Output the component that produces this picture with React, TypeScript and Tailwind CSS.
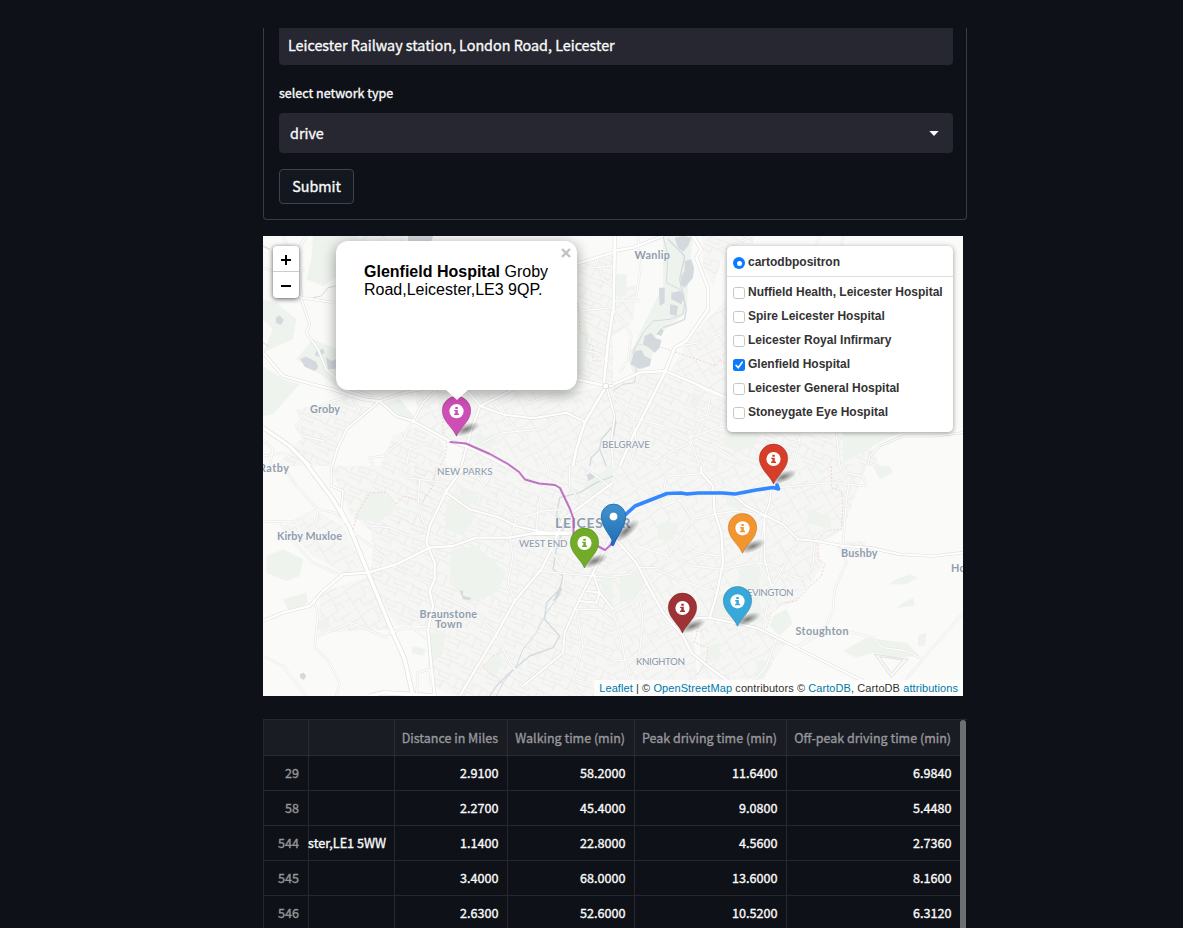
import React from "react";

const SANS = "font-['Noto_Sans_CJK_JP',sans-serif] [-webkit-text-stroke:0.35px_currentColor]";

type Shape = { q: number; d: string; w?: number };

const QUADRANTS = ["", "translate(0 0)", "translate(1050 0)", "translate(0 690)", "translate(1050 690)"];

const URBAN: Shape[] = [
  { q: 1, d: "M100 520L240 490L330 520L230 600L200 690H40L120 600Z" },
  { q: 1, d: "M460 470H940L1050 440V690H590L600 640L460 560Z" },
  { q: 1, d: "M945 80L1050 60V440L945 430Z" },
  { q: 1, d: "M190 10L330 0H430V15H260L215 80L170 60Z" },
  { q: 1, d: "M390 600L460 570L540 620L550 690H350Z" },
  { q: 2, d: "M0 150H70L60 260L0 300Z" },
  { q: 2, d: "M0 440L150 400L340 480L440 580L620 600H760L800 690H0Z" },
  { q: 2, d: "M230 310L340 190V480L170 410Z" },
  { q: 2, d: "M270 0H420V25H340L300 150L270 90Z" },
  { q: 3, d: "M60 180L170 140L240 180L310 320L240 320L150 270Z" },
  { q: 3, d: "M450 0H1050V690H580L500 660L490 480L400 480L320 330L340 180L480 150Z" },
  { q: 3, d: "M170 380L320 330L390 490L170 500Z" },
  { q: 3, d: "M200 0H520L480 200H330L260 140Z" },
  { q: 4, d: "M0 0H760L690 190L610 240L630 300L550 405L480 430L450 490L240 500L260 690H0Z" },
  { q: 4, d: "M670 230L760 225L750 275L680 270Z" },
  { q: 4, d: "M260 490L450 490L520 530L440 640H260Z" },
];

const GREEN: Shape[] = [
  { q: 1, d: "M150 0H280L290 60L240 110L180 150L130 130L145 70Z" },
  { q: 1, d: "M0 190L40 200L100 250L90 310L0 350L30 280L0 250Z" },
  { q: 1, d: "M0 390L60 430L110 445L60 500L30 535L0 540Z" },
  { q: 1, d: "M150 310L220 340V450L150 400L100 370Z" },
  { q: 1, d: "M365 500L410 490L460 550L400 540Z" },
  { q: 1, d: "M520 465L600 470L620 550L570 590L530 540Z" },
  { q: 1, d: "M850 470L950 465L920 490L860 500Z" },
  { q: 1, d: "M945 200L980 300L960 400L945 420Z" },
  { q: 1, d: "M640 590L700 610L680 640L630 620Z" },
  { q: 2, d: "M150 0H240L225 150L220 230L130 300L110 390L60 410L45 370L90 270L150 150Z" },
  { q: 2, d: "M0 115H40V180H0Z" },
  { q: 2, d: "M240 470L270 480L250 515L230 500Z" },
  { q: 2, d: "M345 590H430L440 620L370 650L320 610Z" },
  { q: 2, d: "M690 590H860L780 630L690 680Z" },
  { q: 3, d: "M310 80L350 75L390 100L400 130L350 165L270 160Z" },
  { q: 3, d: "M555 100L600 90L640 140L600 210L545 190Z" },
  { q: 3, d: "M590 60L650 90L640 120L590 100Z" },
  { q: 3, d: "M565 250L640 240L730 320L700 380L620 410L560 350Z" },
  { q: 3, d: "M10 270L60 250L120 280L110 330L70 345L10 320Z" },
  { q: 3, d: "M60 400L130 380L135 410L80 440Z" },
  { q: 3, d: "M500 510L550 490L540 560L500 600Z" },
  { q: 3, d: "M450 540L490 550L480 570L445 560Z" },
  { q: 3, d: "M660 600L710 560L720 590L690 640Z" },
  { q: 3, d: "M960 50L1050 0V60L990 90Z" },
  { q: 3, d: "M1010 330L1050 320V420L1020 400Z" },
  { q: 3, d: "M165 465L200 460L195 490L160 490Z" },
  { q: 4, d: "M140 170L200 170L180 225L130 220Z" },
  { q: 4, d: "M20 330L80 310L100 350L70 400L20 410Z" },
  { q: 4, d: "M385 300L440 300L440 400L450 470L300 450L310 390L370 370Z" },
  { q: 4, d: "M340 80L400 110L390 130L340 120Z" },
  { q: 4, d: "M590 130L650 150L655 190L580 170Z" },
  { q: 4, d: "M780 0H830L840 20L800 40Z" },
  { q: 4, d: "M690 555L760 515L880 530L920 570L850 575L780 560L730 575Z" },
  { q: 4, d: "M915 510L940 500L935 540L915 540Z" },
  { q: 4, d: "M850 340L890 325L915 335L880 355L825 355Z" },
  { q: 4, d: "M870 410L900 395L905 420L850 425Z" },
  { q: 4, d: "M480 450L520 430L540 470L500 510L470 480Z" },
  { q: 4, d: "M290 540L320 530V580L280 590Z" },
  { q: 4, d: "M440 580L480 590L450 640H420Z" },
];

const WATER: Shape[] = [
  { q: 1, d: "M435 0H510L505 15H435Z" },
  { q: 1, d: "M38 245L50 238L62 252L55 266L40 262Z" },
  { q: 1, d: "M112 368L130 362L160 378L166 395L155 405L125 392Z" },
  { q: 1, d: "M160 345L180 338L185 350L170 363L155 358Z" },
  { q: 1, d: "M188 362L205 375L218 370V398L195 400Z" },
  { q: 2, d: "M185 5L210 0L235 5L225 30L210 48L195 35Z" },
  { q: 2, d: "M215 75L235 70L243 95L240 125L215 155L203 145L205 120L215 105Z" },
  { q: 2, d: "M138 155L155 155V200L140 210Z" },
  { q: 2, d: "M175 170L200 165L215 180L205 205L175 190Z" },
  { q: 2, d: "M172 205L195 210L190 240L170 235Z" },
  { q: 2, d: "M95 300L115 290L125 305L145 312L140 335L125 350L108 335L90 325Z" },
  { q: 2, d: "M65 345L85 342L95 360L115 370L110 390L80 398L52 385Z" },
  { q: 2, d: "M145 275L152 285L145 300L130 295Z" },
  { q: 3, d: "M875 395L890 360L898 370L880 400L868 405Z" },
  { q: 3, d: "M590 373L600 375L600 390L625 395L620 402L600 400Z" },
  { q: 3, d: "M110 625L122 620L130 630L122 642L112 635Z" },
  { q: 3, d: "M972 25L990 20L995 35L975 45Z" },
];

const STREAMS: Shape[] = [
  { q: 1, d: "M0 30L20 40", w: 4 },
  { q: 1, d: "M150 185L175 180L195 155L218 150" },
  { q: 1, d: "M1030 690L1010 640L1015 610L1050 570M1010 640L985 665L980 690", w: 4 },
  { q: 1, d: "M0 320L15 330" },
  { q: 2, d: "M150 0L165 60L160 140L200 160L215 200L210 235L170 250L120 255L90 290L60 350L70 400L65 440L30 445L0 465", w: 3 },
  { q: 2, d: "M165 10L215 60L200 130L220 220L215 250L180 265L150 275", w: 4 },
  { q: 2, d: "M0 520L8 560L0 600", w: 5 },
  { q: 3, d: "M1050 30L1000 50L950 80L890 95L880 150L905 175L880 250L870 310L900 330L890 370L850 410L845 460L890 510L870 545L800 570L740 620L700 660L680 690", w: 4 },
  { q: 3, d: "M895 380L850 440L820 500L780 550L760 600L720 650L700 690" },
];

const MINOR: Shape[] = [
  { q: 1, d: "M0 95L50 115L110 110L125 100" },
  { q: 1, d: "M60 0L85 60L75 95" },
  { q: 1, d: "M350 500L270 480L190 500L130 540L100 570L120 600L180 615L220 590" },
  { q: 1, d: "M0 610L30 640L20 690" },
  { q: 1, d: "M0 660L60 650L90 670" },
  { q: 1, d: "M270 490L290 520L260 560" },
  { q: 1, d: "M450 555L420 610L360 660L320 665L330 690" },
  { q: 1, d: "M360 660L390 690" },
  { q: 1, d: "M690 500L760 580L830 650L850 690" },
  { q: 1, d: "M640 630L720 590L830 580L900 540" },
  { q: 1, d: "M950 225L1050 215M990 95L1050 90M1000 60L1020 130L1050 150" },
  { q: 1, d: "M750 460L800 500L880 470" },
  { q: 1, d: "M945 340L1000 350L1040 380" },
  { q: 1, d: "M430 690L440 640L500 620" },
  { q: 2, d: "M75 0L82 100L70 180L75 195H0" },
  { q: 2, d: "M0 220L40 270L55 300L45 370L20 410" },
  { q: 2, d: "M0 480L60 550L70 620L50 690" },
  { q: 2, d: "M60 545L150 570L230 605L330 570L440 580" },
  { q: 2, d: "M290 490L280 550L230 605L260 690" },
  { q: 2, d: "M240 440L290 470L340 485L300 530L240 550" },
  { q: 2, d: "M310 45L350 30L420 0" },
  { q: 2, d: "M120 690L170 650L250 610L320 640L400 690" },
  { q: 2, d: "M430 585L480 640L560 610L550 590" },
  { q: 2, d: "M560 610L540 690M670 590L680 690" },
  { q: 2, d: "M620 0L610 30M690 0L685 30" },
  { q: 2, d: "M200 330L260 320L340 290" },
  { q: 3, d: "M0 165L90 168L165 130L215 140L245 170" },
  { q: 3, d: "M60 0L100 60L165 130" },
  { q: 3, d: "M50 170L90 225L150 290L240 330" },
  { q: 3, d: "M90 225L160 170L165 130" },
  { q: 3, d: "M270 200L330 245L390 300L500 355" },
  { q: 3, d: "M330 230V180L380 185L440 210L490 210" },
  { q: 3, d: "M410 10L430 35L540 50L550 75" },
  { q: 3, d: "M470 40L465 120L490 190" },
  { q: 3, d: "M150 400L165 440L155 545L200 590L230 650L220 690" },
  { q: 3, d: "M165 510L265 470L370 515L385 500L420 488L500 490" },
  { q: 3, d: "M0 570L60 600L130 690" },
  { q: 3, d: "M510 375L560 400L620 430L700 500" },
  { q: 3, d: "M700 510L740 590L790 655L840 690" },
  { q: 3, d: "M620 0L680 80L760 160L740 215L750 270L735 350L755 405" },
  { q: 3, d: "M760 160L840 135L900 130" },
  { q: 3, d: "M820 200L825 120L860 0" },
  { q: 3, d: "M830 315L930 325L1050 335" },
  { q: 3, d: "M860 240L905 320L900 360L950 400" },
  { q: 3, d: "M940 430L960 540L930 650L950 690" },
  { q: 3, d: "M960 540L1050 565M940 640L1050 670" },
  { q: 3, d: "M940 430H1010L1050 470" },
  { q: 3, d: "M460 690L465 620L500 610L505 660" },
  { q: 3, d: "M920 0V60L960 120M960 0L1050 70M1050 270L1010 230" },
  { q: 3, d: "M455 490L490 520" },
  { q: 4, d: "M0 20L50 45L110 80L170 85" },
  { q: 4, d: "M150 90L160 30L240 25L265 20" },
  { q: 4, d: "M190 85L240 160L270 155L300 145L370 135L455 150" },
  { q: 4, d: "M110 85L150 120L210 100L240 80" },
  { q: 4, d: "M240 160L190 230L165 270L70 240L40 210" },
  { q: 4, d: "M190 235L250 260L320 270" },
  { q: 4, d: "M75 305H130L180 270L240 300L330 310L430 290L490 300L540 330" },
  { q: 4, d: "M100 350L130 310L210 345L310 380" },
  { q: 4, d: "M0 330L50 325L70 300M0 270L30 240" },
  { q: 4, d: "M100 350L60 410L0 440" },
  { q: 4, d: "M80 400L90 450L80 560L50 580L0 585" },
  { q: 4, d: "M90 545L140 490L190 470" },
  { q: 4, d: "M455 150L440 300L480 360L460 430L450 490" },
  { q: 4, d: "M480 360L555 220M605 230L600 300L570 340L540 330" },
  { q: 4, d: "M500 65L650 50L760 60L750 30L690 20L680 0" },
  { q: 4, d: "M710 40L700 100L690 240L700 290L665 370L660 430L640 480L550 545" },
  { q: 4, d: "M550 545L610 510L700 495L780 515L810 545L880 555L930 580" },
  { q: 4, d: "M490 520L460 600L410 660L390 690" },
  { q: 4, d: "M1050 440L930 580L880 640L860 690" },
  { q: 4, d: "M0 440L20 500L40 600L60 690" },
  { q: 4, d: "M280 605L230 650L180 690M290 605L370 660" },
  { q: 4, d: "M380 90L340 60L300 40" },
  { q: 4, d: "M520 0L490 50" },
];

const MAJOR: Shape[] = [
  { q: 1, d: "M0 350L60 420L150 445L210 460L300 490L350 495L400 540L450 555L560 615L620 635L730 690", w: 7 },
  { q: 1, d: "M130 0L75 90L110 110L115 190L140 265L130 290L165 340L190 400L250 455L330 480", w: 5 },
  { q: 1, d: "M50 150L115 185L215 200", w: 5 },
  { q: 1, d: "M350 495L250 580L222 640L208 690", w: 6 },
  { q: 1, d: "M350 495L420 470L480 460M450 555L480 500L520 460", w: 5 },
  { q: 1, d: "M610 462L652 510L625 580L595 690M652 510L750 460M652 510L720 535L810 547L910 530L970 560", w: 6 },
  { q: 1, d: "M940 430L1030 450H1050M1030 450L965 560L940 640L930 690M1022 450L1035 320L1052 210L1055 50V0", w: 8 },
  { q: 1, d: "M1030 450L1055 540L1045 610L1050 690", w: 5 },
  { q: 1, d: "M935 85L1050 50", w: 7 },
  { q: 2, d: "M0 45L60 35L150 0", w: 7 },
  { q: 2, d: "M240 0L265 40L250 65L285 155L285 220L220 315L185 335L155 410L110 500L60 600L20 690", w: 8 },
  { q: 2, d: "M0 445L80 410L155 405L240 440L340 485", w: 7 },
  { q: 2, d: "M1050 590L960 600L870 600L800 630L770 660L765 690", w: 4 },
  { q: 3, d: "M0 465L60 440L140 420L180 375L240 325L315 320L400 295L500 245L570 240L640 215L740 215L820 200L930 200", w: 7 },
  { q: 3, d: "M605 0L550 75L500 180L490 230L515 290L515 340L500 375L510 420L495 490L505 600L515 690", w: 7 },
  { q: 3, d: "M550 80L620 130L710 155L760 180L850 200", w: 6 },
  { q: 3, d: "M590 690L700 505L755 405L835 310L870 240L900 160L1050 50", w: 7 },
  { q: 3, d: "M780 660L900 560L905 500L940 420L990 320L1050 200M950 405L1000 410L1010 380L970 375M990 320L1010 380L1050 430", w: 6 },
  { q: 3, d: "M205 0V60L240 75L235 130L265 190", w: 5 },
  { q: 4, d: "M0 210L70 290L100 350L150 440L210 510L235 560L290 605L350 650L370 690", w: 7 },
  { q: 4, d: "M265 0V20L300 60L305 140L325 200L330 290L310 390L290 455", w: 7 },
  { q: 4, d: "M250 455L290 455L430 485L550 545L620 580L750 645", w: 6 },
  { q: 4, d: "M360 85L400 120L460 150L510 175L555 220L610 225L690 240L770 245L860 265L960 270L1050 260", w: 6 },
  { q: 4, d: "M475 60L470 110L455 150V280L475 360", w: 5 },
];

const MOTORWAY: Shape[] = [
  { q: 1, d: "M0 575L80 630L140 690", w: 10 },
  { q: 3, d: "M125 -15L150 20L210 100L260 185L315 320L385 490L425 580L450 690M320 690L360 680L440 685L520 690", w: 11 },
  { q: 3, d: "M810 202H920", w: 10 },
];

const BOUNDARY: Shape[] = [
  { q: 1, d: "M540 500V600L552 625L545 665L530 690" },
  { q: 1, d: "M945 200L952 290L970 295V320L990 330V375H1015" },
  { q: 2, d: "M55 345L75 325L140 332L310 390L320 370L340 385" },
  { q: 3, d: "M270 190L285 140L320 80L370 80L400 115L420 90L480 105L510 60L520 0" },
  { q: 3, d: "M720 650L660 605L690 570L720 555" },
  { q: 4, d: "M655 0V65L685 75L690 120L685 190L640 195L615 220V280L635 295L625 330L590 360L550 405L510 410L475 440L460 490" },
  { q: 4, d: "M260 460L245 530L285 545L280 590L240 640" },
];

function Layer({ shapes, stroke, extra = 0, fallback = 3, dash }: { shapes: Shape[]; stroke: string; extra?: number; fallback?: number; dash?: string }) {
  return (
    <>
      {shapes.map((s, i) => (
        <path key={i} transform={QUADRANTS[s.q]} d={s.d} fill="none" stroke={stroke} strokeWidth={(s.w ?? fallback) + extra} strokeDasharray={dash} strokeLinejoin="round" />
      ))}
    </>
  );
}

function Fill({ shapes, fill }: { shapes: Shape[]; fill: string }) {
  return (
    <>
      {shapes.map((s, i) => (
        <path key={i} transform={QUADRANTS[s.q]} d={s.d} fill={fill} />
      ))}
    </>
  );
}

const LABELS: { t: string; x: number; y: number; w: number; bold?: boolean; size?: number }[] = [
  { t: "Wanlip", x: 371.5, y: 22.5, w: 35.5, bold: true },
  { t: "Groby", x: 47, y: 176.5, w: 30, bold: true },
  { t: "Ratby", x: -4, y: 236, w: 30, bold: true },
  { t: "Kirby Muxloe", x: 14, y: 304, w: 65, bold: true },
  { t: "Braunstone", x: 156.5, y: 381.5, w: 57.5, bold: true },
  { t: "Town", x: 172, y: 391.8, w: 27, bold: true },
  { t: "Bushby", x: 578, y: 321, w: 36.5, bold: true },
  { t: "Stoughton", x: 532.5, y: 399, w: 53, bold: true },
  { t: "Houghton", x: 688, y: 336, w: 50, bold: true },
  { t: "NEW PARKS", x: 174, y: 238.5, w: 55.5 },
  { t: "BELGRAVE", x: 339, y: 212, w: 48 },
  { t: "WEST END", x: 256, y: 310.5, w: 48.5 },
  { t: "EVINGTON", x: 484, y: 360, w: 46.5 },
  { t: "KNIGHTON", x: 373, y: 428.5, w: 49 },
  { t: "LEICESTER", x: 292, y: 291.5, w: 75.5, size: 14 },
];

const PINS = [
  { x: 193.5, y: 160.2, c: "#cd4eb4", e: "#8f2c7c" },
  { x: 510.5, y: 208, c: "#d63e2a", e: "#982315" },
  { x: 479.5, y: 277.3, c: "#f3952f", e: "#b86a16" },
  { x: 321.5, y: 292, c: "#70ac26", e: "#4b7c12" },
  { x: 474.5, y: 350.3, c: "#38a7da", e: "#1d789f" },
  { x: 419.5, y: 357, c: "#9f3235", e: "#6b1c20" },
];

function BaseMap() {
  return (
    <svg className="block h-[460px] w-[700px]" viewBox="0 0 700 460">
      <defs>
        <pattern id="streetsA" width="78" height="66" patternUnits="userSpaceOnUse" patternTransform="rotate(24)">
          <path d="M0 9Q40 20 78 9M14 12V44H0M14 44L52 40V66M52 40H78M33 15V28H66V12M14 56H52" fill="none" stroke="#e9e9e8" strokeWidth="2.2" />
        </pattern>
        <pattern id="streetsB" width="96" height="88" patternUnits="userSpaceOnUse" patternTransform="rotate(-31)">
          <path d="M0 14Q48 0 96 14M20 10V50H66V10M20 50V88M44 50V74H96M0 36H20M66 30H84V52M66 74V88" fill="none" stroke="#e9e9e8" strokeWidth="2.2" />
        </pattern>
        <radialGradient id="pinShadow">
          <stop offset="0" stopColor="#000" stopOpacity="0.5" />
          <stop offset="0.5" stopColor="#000" stopOpacity="0.25" />
          <stop offset="1" stopColor="#000" stopOpacity="0" />
        </radialGradient>
        <linearGradient id="stationPin" x1="0" y1="0" x2="0" y2="1">
          <stop offset="0" stopColor="#3f93cf" />
          <stop offset="1" stopColor="#2370b5" />
        </linearGradient>
      </defs>
      <rect width="700" height="460" fill="#fafaf8" />
      <g transform="scale(0.333333)">
        <Fill shapes={URBAN} fill="#f6f6f4" />
        <Fill shapes={URBAN.filter((_, i) => i % 2 === 0)} fill="url(#streetsA)" />
        <Fill shapes={URBAN.filter((_, i) => i % 2 === 1)} fill="url(#streetsB)" />
        <Fill shapes={GREEN} fill="#eff3ee" />
        <Layer shapes={STREAMS} stroke="#d3dbdf" />
        <Fill shapes={WATER} fill="#d3d9dd" />
        <Layer shapes={BOUNDARY} stroke="#efd3d3" dash="6 5" />
        <Layer shapes={MINOR} stroke="#e5e5e4" extra={3} fallback={4} />
        <Layer shapes={MAJOR} stroke="#e0e0df" extra={3.5} />
        <Layer shapes={MOTORWAY} stroke="#dededd" extra={4} />
        <Layer shapes={MINOR} stroke="#fdfdfd" fallback={4} />
        <Layer shapes={MAJOR} stroke="#ffffff" />
        <Layer shapes={MOTORWAY} stroke="#ffffff" />
        <circle cx="1028" cy="450" r="9" fill="#fff" stroke="#ddd" strokeWidth="3" />
        <path transform={QUADRANTS[4]} d="M785 565L885 580L835 635ZM800 572L870 582L835 622Z" fill="none" stroke="#e0e2e1" strokeWidth="3" />
      </g>
      <g className="font-[Lato,sans-serif]" fill="#8f9dae" stroke="#fafaf8" strokeWidth="1.2" paintOrder="stroke" strokeLinejoin="round">
        {LABELS.map((l) => (
          <text key={l.t} x={l.x} y={l.y} textLength={l.w} fontSize={l.size ?? (l.bold ? 10.8 : 9.8)} fontWeight={l.bold || l.size ? 700 : 500}>
            {l.t}
          </text>
        ))}
      </g>
      <g fill="none" strokeLinejoin="round" strokeLinecap="round">
        <path d="M187.500 206L203 207.500L227 218L245 228L256 236L262 243.500L276 247.500L292 249L297 252L307 273L310.500 283V298L327 306L342 314L350 307" stroke="#b65cb9" strokeOpacity="0.85" strokeWidth="2" />
        <path d="M349.500 307L357 294L361 280L372 270L390 263L404 257.500L418 257L424 258L435 257L460 257L472 258L480 256.500L493 254L510 251.500L515.500 253L514 249" stroke="#3388ff" strokeWidth="3.6" />
        <path d="M349.500 308L353 299L358 290" stroke="#2a5ed8" strokeWidth="4" />
      </g>
      <ellipse cx="363" cy="295" rx="17" ry="6" fill="url(#pinShadow)" transform="rotate(-40 363 295)" />
      <path d="M350.500 307.500C347 298 338.300 291 338.300 280.300A12.200 12.200 0 0 1 362.700 280.300C362.700 291 354 298 350.500 307.500Z" fill="url(#stationPin)" stroke="#2a6da6" strokeWidth="0.9" />
      <circle cx="350.500" cy="280.500" r="4.300" fill="#fff" stroke="#2b71aa" strokeWidth="0.6" />
      {PINS.map((p) => (
        <g key={p.c} transform={`translate(${p.x} ${p.y})`}>
          <ellipse cx="10" cy="33" rx="14" ry="5.500" fill="url(#pinShadow)" transform="rotate(-22 10 33)" />
          <path d="M0 40C-3 32-14.200 25-14.200 14.300A14.200 14.200 0 0 1 14.200 14.300C14.200 25 3 32 0 40Z" fill={p.c} stroke={p.e} strokeOpacity="0.6" strokeWidth="0.8" />
          <circle cx="0" cy="15" r="7.100" fill="#fff" />
          <path d="M-1.200 10.700H1.300V12.700H-1.200ZM-2.300 13.700H1.300V17.400H2.500V18.900H-2.400V17.400H-1.200V15.100H-2.300Z" fill={p.c} />
        </g>
      ))}
    </svg>
  );
}

const HOSPITALS = [
  { name: "Nuffield Health, Leicester Hospital", on: false },
  { name: "Spire Leicester Hospital", on: false },
  { name: "Leicester Royal Infirmary", on: false },
  { name: "Glenfield Hospital", on: true },
  { name: "Leicester General Hospital", on: false },
  { name: "Stoneygate Eye Hospital", on: false },
];

function MapPanel() {
  return (
    <div className="relative mt-4 h-[460px] w-[700px] overflow-hidden font-['Liberation_Sans',sans-serif]">
      <BaseMap />
      <div className="absolute top-[10px] left-[10px] w-[26px] rounded bg-white shadow-[0_1px_5px_rgba(0,0,0,0.65)]">
        <div className="flex h-[26px] items-center justify-center border-b border-[#ccc] pt-[3px]">
          <svg className="size-[12px]" viewBox="0 0 12 12"><path d="M1 6H11M6 1V11" stroke="#000" strokeWidth="2" /></svg>
        </div>
        <div className="flex h-[26px] items-center justify-center pt-[2px]">
          <svg className="size-[12px]" viewBox="0 0 12 12"><path d="M1 6H11" stroke="#000" strokeWidth="2" /></svg>
        </div>
      </div>

      <div className="absolute top-[5px] left-[73px] h-[149px] w-[241px] rounded-xl bg-white pt-[22px] pl-7 text-base leading-[18px] text-black shadow-[0_3px_14px_rgba(0,0,0,0.4)]">
        <p className="w-[190px]"><b>Glenfield Hospital</b> Groby Road,Leicester,LE3 9QP.</p>
        <svg className="absolute top-[7px] right-[6px] size-[10px]" viewBox="0 0 10 10"><path d="M1 1L9 9M9 1L1 9" stroke="#c3c3c3" strokeWidth="2.400" /></svg>
        <svg className="absolute top-[148px] left-[109px] h-[12px] w-[24px]" viewBox="0 0 24 12"><path d="M0 0H24L12 11Z" fill="#fff" /></svg>
      </div>

      <div className="absolute top-[10px] right-[10px] h-[186px] w-[226px] rounded-[5px] bg-white text-xs font-bold text-[#333] shadow-[0_1px_5px_rgba(0,0,0,0.4)]">
        <div className="flex h-[31px] items-center gap-[3px] border-b border-[#ddd] pl-[6px]">
          <span className="mt-[4px] flex size-[12px] items-center justify-center rounded-full bg-[#0a7aff]"><span className="size-[5px] rounded-full bg-white" /></span>
          <span className="pt-[2px]">cartodbpositron</span>
        </div>
        <div className="flex flex-col pt-[3px]">
          {HOSPITALS.map((h) => (
            <div key={h.name} className="flex h-6 items-center gap-[3px] pl-[6px]">
              {h.on ? (
                <svg className="mt-px size-[12px]" viewBox="0 0 12 12"><rect width="12" height="12" rx="2.500" fill="#0a7aff" /><path d="M3 6.300L5.200 8.800L9.200 3.200" fill="none" stroke="#fff" strokeWidth="1.600" strokeLinecap="round" strokeLinejoin="round" /></svg>
              ) : (
                <span className="mt-px size-[12px] rounded-[2.5px] border border-[#c6c6c6] bg-white" />
              )}
              <span className="whitespace-nowrap">{h.name}</span>
            </div>
          ))}
        </div>
      </div>

      <div className="absolute right-0 bottom-0 h-4 bg-white/70 px-[5px] text-[11px] leading-4 tracking-[0.083px] whitespace-nowrap text-[#333]">
        <span className="text-[#0078a8]">Leaflet</span> | © <span className="text-[#0078a8]">OpenStreetMap</span> contributors © <span className="text-[#0078a8]">CartoDB</span>, CartoDB <span className="text-[#0078a8]">attributions</span>
      </div>
    </div>
  );
}

const ROWS = [
  ["29", "", "2.9100", "58.2000", "11.6400", "6.9840"],
  ["58", "", "2.2700", "45.4000", "9.0800", "5.4480"],
  ["544", "ster,LE1 5WW", "1.1400", "22.8000", "4.5600", "2.7360"],
  ["545", "", "3.4000", "68.0000", "13.6000", "8.1600"],
  ["546", "", "2.6300", "52.6000", "10.5200", "6.3120"],
];
const HEADS = ["", "", "Distance in Miles", "Walking time (min)", "Peak driving time (min)", "Off-peak driving time (min)"];

function DataTable() {
  return (
    <div className={`mt-[23px] flex h-[209px] w-[704px] overflow-hidden border-t border-l border-[#26282d] text-[12.6px] ${SANS}`}>
      <div className="w-[696px] shrink-0">
        <div className="grid h-9 grid-cols-[45px_86px_113px_127px_152px_173px] bg-[#1a1c24] text-[12.5px] text-[#96979b]">
          {HEADS.map((h, i) => (
            <div key={i} className={`flex items-center justify-end border-b border-[#2a2c31] pt-[2px] pr-[9px] whitespace-nowrap ${i < 5 ? "border-r" : ""}`}>{h}</div>
          ))}
        </div>
        {ROWS.map((r) => (
          <div key={r[0]} className="grid h-[35px] grid-cols-[45px_86px_113px_127px_152px_173px] text-[#fafafa]">
            {r.map((c, i) => (
              <div key={i} className={`flex items-center justify-end border-b border-[#26282d] whitespace-nowrap ${i < 5 ? "border-r" : ""} ${i === 0 ? "pr-[9px] text-[#96979b]" : i === 1 ? "pr-2" : "pr-[8.6px]"}`}>{c}</div>
            ))}
          </div>
        ))}
      </div>
      <div className="w-[6px] rounded-t-full bg-[#6e6f72]" />
    </div>
  );
}

export default function App() {
  return (
    <div className="h-[928px] w-[1183px] overflow-hidden bg-[#0e1117] pt-7 pl-[263px] text-[#fafafa]">
      <form className={`h-48 w-[704px] rounded-b border border-t-0 border-[#3a3c41] px-[15px] ${SANS}`}>
        <div className="flex h-[37px] w-[674px] items-center rounded-b bg-[#262730] pb-[3px] pl-[9px] text-[14.33px]">
          Leicester Railway station, London Road, Leicester
        </div>
        <label className="mt-[18px] flex h-5 items-center text-[12.5px]">select network type</label>
        <div className="mt-[10px] flex h-10 w-[674px] items-center justify-between rounded bg-[#262730] pr-[14px] pl-[11px] text-[14.33px]">
          drive
          <svg className="h-[5px] w-[10px]" viewBox="0 0 10 5"><path d="M0.300 0H9.700L5 5Z" fill="#fafafa" /></svg>
        </div>
        <button type="button" className="mt-4 flex h-[35px] w-[75px] items-center justify-center rounded border border-[#414349] bg-[#131720] pb-[2px] text-[14.33px]">
          Submit
        </button>
      </form>
      <MapPanel />
      <DataTable />
    </div>
  );
}
